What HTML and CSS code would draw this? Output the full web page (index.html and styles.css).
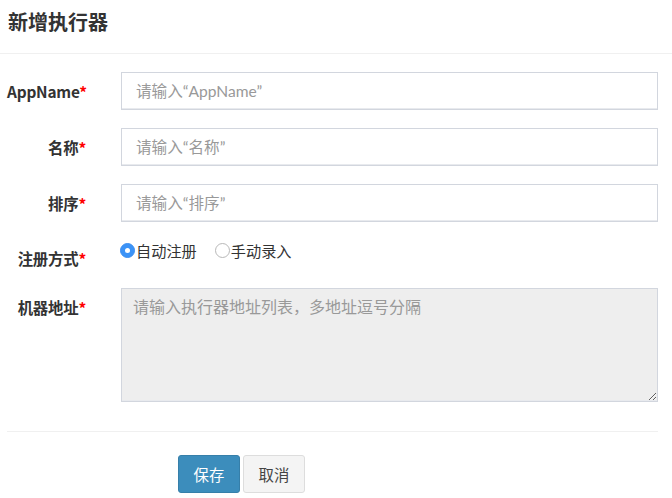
FILE: index.html
```
<!DOCTYPE html>
<html lang="zh">
<head>
<meta charset="utf-8">
<link rel="stylesheet" href="styles.css">
</head>
<body>
<div class="modal">
  <div class="modal-header">
    <h4 class="modal-title">新增执行器</h4>
  </div>
  <form class="modal-body">
    <div class="row">
      <label class="label">AppName<span class="req">*</span></label>
      <input class="control" type="text" placeholder="请输入“AppName”">
    </div>
    <div class="row">
      <label class="label">名称<span class="req">*</span></label>
      <input class="control" type="text" placeholder="请输入“名称”">
    </div>
    <div class="row">
      <label class="label">排序<span class="req">*</span></label>
      <input class="control" type="text" placeholder="请输入“排序”">
    </div>
    <div class="row row-radio">
      <label class="label">注册方式<span class="req">*</span></label>
      <div class="radios">
        <label class="radio"><span class="dot checked"></span>自动注册</label>
        <label class="radio"><span class="dot"></span>手动录入</label>
      </div>
    </div>
    <div class="row row-area">
      <label class="label">机器地址<span class="req">*</span></label>
      <textarea class="control area" readonly placeholder="请输入执行器地址列表，多地址逗号分隔"></textarea>
    </div>
    <div class="divider"></div>
    <div class="actions">
      <button type="button" class="btn btn-primary">保存</button>
      <button type="button" class="btn btn-default">取消</button>
    </div>
  </form>
</div>
</body>
</html>
```
FILE: styles.css
```
* { box-sizing: border-box; }
html, body { margin: 0; padding: 0; background: #fff; }
body {
  font-family: "Noto Sans CJK SC", "Noto Sans", sans-serif;
  font-size: 15.4px;
  color: #333;
}
.modal-header {
  height: 54px;
  padding: 0 8px;
  border-bottom: 1px solid #f0f0f0;
  display: flex;
  align-items: center;
}
.modal-title {
  margin: 0;
  font-size: 20px;
  font-weight: 600;
  color: #333;
  line-height: 1;
  position: relative;
  top: -5px;
}
.modal-body {
  padding: 18px 14px 0 7px;
}
.row {
  display: flex;
  align-items: flex-start;
  margin-bottom: 18px;
}
.label {
  width: 79px;
  flex: 0 0 79px;
  margin-right: 35px;
  text-align: right;
  font-weight: 700;
  line-height: 38px;
  white-space: nowrap;
  color: #333;
  letter-spacing: -0.2px;
}
.req { color: #f00; }
.control {
  flex: 1;
  height: 38px;
  border: 1px solid #d2d6de;
  border-radius: 0;
  padding: 0 14px;
  font-family: "Lato", "Noto Sans CJK SC", sans-serif;
  font-size: 15.6px;
  color: #555;
  background: #fff;
  outline: none;
  box-shadow: inset 0 -1px 0 #e8eaee;
}
.control::placeholder { color: #999; }
.row-radio { margin-bottom: 18px; height: 30px; }
.row-radio .label { line-height: 20px; padding-top: 8px; }
.radios {
  display: flex;
  gap: 18px;
  padding-top: 0;
  margin-left: -1px;
}
.radio {
  display: flex;
  align-items: center;
  line-height: 20px;
  font-size: 15.2px;
  color: #333;
}
.dot {
  width: 15px;
  height: 15px;
  border-radius: 50%;
  border: 1px solid #b8b8b8;
  background: #fff;
  margin-right: 1px;
  position: relative;
}
.dot.checked {
  background: #3b93f7;
  border-color: #3b8ef0;
}
.dot.checked::after {
  content: "";
  position: absolute;
  left: 50%;
  top: 50%;
  width: 5px;
  height: 5px;
  margin: -2.5px 0 0 -2.5px;
  border-radius: 50%;
  background: #fff;
}
.row-area .label { line-height: 20px; padding-top: 9px; }
.area {
  height: 114px;
  padding: 6px 11px;
  background: #eee;
  resize: vertical;
  line-height: 22px;
  font-family: "Noto Sans CJK SC", sans-serif;
  font-size: 16px;
}
.divider {
  height: 1px;
  background: #f0f0f0;
  margin-top: 29px;
}
.actions {
  display: flex;
  gap: 3px;
  padding: 23px 0 0 171px;
}
.btn {
  height: 38px;
  width: 62px;
  border-radius: 3px;
  font-family: inherit;
  font-size: 15.4px;
  border: 1px solid transparent;
  padding: 0;
  cursor: pointer;
}
.btn-primary {
  background: #3c8dbc;
  border-color: #367fa9;
  color: #fff;
}
.btn-default {
  background: #f4f4f4;
  border-color: #ddd;
  color: #444;
}
```
